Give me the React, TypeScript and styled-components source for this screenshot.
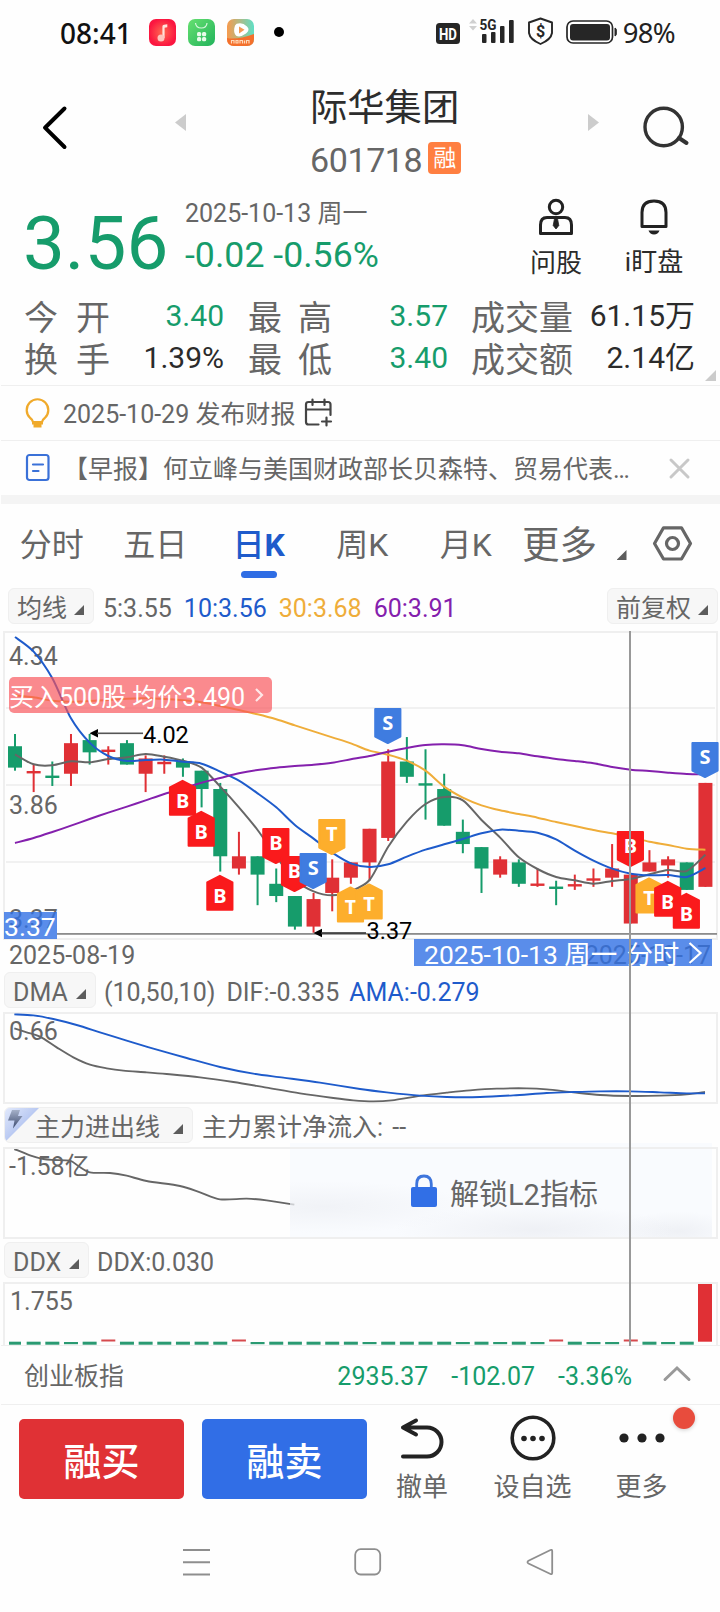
import React from "react";
import styled, { createGlobalStyle } from "styled-components";

const GREEN = "#169c6b";
const RED = "#e03035";
const BLUE = "#1e5bcb";
const GREY = "#666666";
const INK = "#2b2b2b";
const ORANGE = "#efad3a";
const PURPLE = "#8420ad";
const LINE = "#efefef";

const GlobalStyle = createGlobalStyle`
  * { box-sizing: border-box; }
  html, body { margin: 0; padding: 0; background: #fefefe; }
  body { font-family: Roboto, "Noto Sans CJK SC", sans-serif; color: ${GREY}; }
  svg { display: block; flex: none; overflow: visible; }
  svg text { font-family: Roboto, "Noto Sans CJK SC", sans-serif; }
`;

const Screen = styled.div`
  width: 720px;
  height: 1612px;
  overflow: hidden;
  display: flex;
  flex-direction: column;
  background: #fefefe;
`;

/* ---------- status bar ---------- */

const StatusBar = styled.div`
  height: 64px;
  padding: 0 45px 0 60px;
  display: flex;
  align-items: center;
  color: #111;
`;

const Clock = styled.span`
  font: 500 28px/40px "Noto Sans", sans-serif;
  width: 89px;
  margin-top: 2px;
`;

const StatusApps = styled.div`
  display: flex;
  gap: 12px;
  flex: 1;
`;

const Battery = styled.span`
  font: 400 27.5px/40px "Noto Sans", sans-serif;
  letter-spacing: -0.7px;
  margin: 2px 0 0 6px;
  color: #222;
`;

/* ---------- header ---------- */

const Header = styled.div`
  height: 122px;
  display: grid;
  grid-template-columns: 174px 136px 278px 55px 1fr;
`;

const HeaderCell = styled.div<{ $left?: number; $top: number }>`
  padding: ${(p) => p.$top}px 0 0 ${(p) => p.$left ?? 0}px;
`;

const Title = styled.div`
  font-size: 37.3px;
  line-height: 44px;
  color: #2d2d2d;
  white-space: nowrap;
  margin-top: 22px;
`;

const CodeRow = styled.div`
  display: flex;
  align-items: center;
  gap: 6px;
  margin-top: 11px;
  height: 38px;
  font-size: 34px;
  line-height: 38px;
  letter-spacing: -0.4px;
`;

const MarginBadge = styled.span`
  width: 33px;
  height: 32px;
  margin-top: -4px;
  border-radius: 4px;
  background: #ff7f41;
  color: #fff;
  font-size: 23px;
  line-height: 34px;
  text-align: center;
  letter-spacing: 0;
`;

/* ---------- quote ---------- */

const Quote = styled.div`
  height: 100px;
  display: flex;
  padding: 0 17px 0 23px;
`;

const Price = styled.div`
  width: 162px;
  font-size: 74.5px;
  line-height: 116px;
  color: ${GREEN};
`;

const QuoteDetail = styled.div`
  flex: 1;
  padding-top: 10px;
`;

const QuoteDate = styled.div`
  font-size: 25px;
  line-height: 36px;
`;

const Change = styled.div`
  font-size: 35.7px;
  line-height: 46px;
  color: ${GREEN};
`;

const QuoteAction = styled.div`
  width: 98px;
  display: flex;
  flex-direction: column;
  align-items: center;
  font-size: 26px;
  line-height: 36px;
  color: ${INK};
  padding-top: 11px;
  svg { margin-bottom: 10px; }
`;

const Stats = styled.div`
  height: 99px;
  padding: 10px 25px 0 24px;
  display: grid;
  grid-template-columns: 86px 114px 24px 84px 116px 23px 103px 1fr;
  grid-template-rows: 42px 42px;
  position: relative;
`;

const StatLabel = styled.span<{ $spread?: number }>`
  font-size: 34px;
  line-height: 44px;
  white-space: nowrap;
  word-spacing: ${(p) => p.$spread ?? 0}px;
`;

const StatValue = styled.span<{ $color?: string }>`
  font-size: 30px;
  line-height: 40px;
  color: ${(p) => p.$color ?? INK};
  text-align: right;
  white-space: nowrap;
`;

const Corner = styled.i<{ $size?: number; $color?: string }>`
  display: block;
  flex: none;
  width: ${(p) => p.$size ?? 10}px;
  height: ${(p) => p.$size ?? 10}px;
  background: ${(p) => p.$color ?? "#5c5c5c"};
  clip-path: polygon(100% 0, 100% 100%, 0 100%);
`;

const ExpandCorner = styled(Corner)`
  position: absolute;
  right: 4px;
  bottom: 4px;
`;

/* ---------- notices ---------- */

const Notice = styled.div`
  height: 55px;
  margin-left: 1px;
  padding: 0 30px 0 24px;
  border-top: 1px solid ${LINE};
  display: flex;
  align-items: center;
  font-size: 25px;
  line-height: 36px;
  white-space: nowrap;
`;

const NoticeText = styled.span<{ $grow?: boolean }>`
  flex: ${(p) => (p.$grow ? "1" : "none")};
  margin: 3px 9px 0 12px;
`;

const Divider = styled.div`
  height: 9px;
  margin-left: 1px;
  background: #f4f4f4;
`;

/* ---------- period tabs ---------- */

const Tabs = styled.div`
  height: 80px;
  display: grid;
  grid-template-columns: repeat(5, 103.5px) 84px 51px 1fr;
`;

const Tab = styled.div<{ $active?: boolean; $large?: boolean }>`
  display: flex;
  flex-direction: column;
  align-items: center;
  padding-top: 20px;
  font-size: ${(p) => (p.$large ? 37.5 : 32)}px;
  line-height: 42px;
  font-weight: ${(p) => (p.$active ? 700 : 400)};
  color: ${(p) => (p.$active ? BLUE : GREY)};
  &::after {
    content: "";
    width: 36px;
    height: 7px;
    margin-top: 5px;
    border-radius: 4px;
    background: ${(p) => (p.$active ? "#2f6de4" : "transparent")};
  }
`;

const TabGlyph = styled.span`
  font-weight: 500;
`;

const TabCorner = styled.div`
  padding: 46px 0 0 15px;
`;

const Settings = styled.div`
  padding-top: 22px;
`;

/* ---------- indicator rows ---------- */

const IndicatorRow = styled.div<{ $height: number; $top: number; $left?: number }>`
  height: ${(p) => p.$height}px;
  padding: ${(p) => p.$top}px 2px 0 ${(p) => p.$left ?? 4}px;
  display: flex;
  align-items: flex-start;
  font-size: 25px;
  line-height: 36px;
  white-space: nowrap;
`;

const Picker = styled.div<{ $width: number; $indent?: number }>`
  position: relative;
  width: ${(p) => p.$width}px;
  height: 36px;
  padding: 0 9px 0 ${(p) => p.$indent ?? 8}px;
  border: 1px solid #efefef;
  border-radius: 6px;
  background: #f7f7f7;
  display: flex;
  justify-content: space-between;
  line-height: 40px;
  overflow: hidden;
  i { margin-top: 16px; }
`;

const FlashCorner = styled.svg`
  position: absolute;
  left: -1px;
  top: -1px;
`;

const Value = styled.span<{ $color?: string; $gap?: number; $spread?: number }>`
  margin-top: 3px;
  margin-left: ${(p) => p.$gap ?? 12}px;
  word-spacing: ${(p) => p.$spread ?? 0}px;
  color: ${(p) => p.$color ?? GREY};
`;

const Spacer = styled.div`
  flex: 1;
`;

/* ---------- charts ---------- */

const ChartColumn = styled.div`
  position: relative;
`;

const ChartArea = styled.div`
  position: relative;
`;

const Crosshair = styled.div`
  position: absolute;
  left: 629px;
  top: 0;
  bottom: 0;
  width: 2px;
  background: #999;
`;

const TradeBanner = styled.div`
  position: absolute;
  left: 9px;
  top: 46px;
  width: 263px;
  height: 36px;
  border-radius: 5px;
  background: rgba(247, 82, 88, 0.68);
  color: #fff;
  font-size: 25px;
  line-height: 42px;
  white-space: nowrap;
  display: flex;
  svg { margin: 11px 0 0 9px; }
`;

const PriceTag = styled.div`
  position: absolute;
  left: 4px;
  top: 281px;
  width: 53px;
  height: 27px;
  background: rgba(49, 112, 229, 0.8);
  color: #fff;
  font-size: 26.5px;
  line-height: 29px;
`;

const DateTag = styled.div`
  position: absolute;
  left: 414px;
  top: 308px;
  width: 298px;
  height: 27px;
  padding-left: 10px;
  background: rgba(49, 112, 229, 0.8);
  color: #fff;
  font-size: 26.5px;
  line-height: 31px;
  white-space: nowrap;
  display: flex;
  gap: 9px;
  svg { margin: 2px 0 0 0; }
`;

const LockPanel = styled.div`
  position: absolute;
  left: 290px;
  top: -4px;
  width: 422px;
  height: 94px;
  padding: 3px 0 0 121px;
  display: flex;
  align-items: center;
  gap: 13px;
  font-size: 29px;
  background:
    radial-gradient(ellipse 150px 26px at 8% 68%, rgba(228, 230, 236, 0.4), transparent),
    radial-gradient(ellipse 140px 24px at 58% 92%, rgba(228, 230, 236, 0.5), transparent),
    radial-gradient(ellipse 60px 20px at 92% 94%, rgba(228, 230, 236, 0.5), transparent),
    rgba(245, 248, 254, 0.62);
  svg { margin-top: -2px; }
`;

const FrameOverlay = styled.div`
  position: absolute;
  left: 3px;
  top: 0;
  width: 715px;
  height: 92px;
  border: 2px solid ${LINE};
`;

const priceY = (p: number) => 734 + (4.02 - p) * 305.7;
const barX = (i: number) => 15 + i * 18.66;

type Candle = [up: boolean, high: number, top: number, bottom: number, low: number];

const candles: Candle[] = [
  [false, 4.02, 3.98, 3.91, 3.9],
  [true, 3.92, 3.895, 3.895, 3.83],
  [false, 3.93, 3.88, 3.88, 3.85],
  [true, 4.02, 3.99, 3.89, 3.85],
  [false, 4.02, 4.0, 3.96, 3.92],
  [true, 3.98, 3.965, 3.965, 3.92],
  [false, 4.0, 3.99, 3.92, 3.92],
  [true, 3.95, 3.94, 3.89, 3.83],
  [true, 3.95, 3.925, 3.925, 3.89],
  [false, 3.94, 3.93, 3.91, 3.88],
  [false, 3.9, 3.9, 3.84, 3.78],
  [false, 3.86, 3.84, 3.62, 3.57],
  [true, 3.7, 3.62, 3.58, 3.56],
  [false, 3.62, 3.62, 3.56, 3.46],
  [false, 3.58, 3.53, 3.49, 3.47],
  [false, 3.49, 3.49, 3.39, 3.38],
  [true, 3.5, 3.48, 3.39, 3.37],
  [true, 3.61, 3.55, 3.5, 3.44],
  [true, 3.6, 3.6, 3.55, 3.53],
  [true, 3.71, 3.71, 3.6, 3.54],
  [true, 3.97, 3.93, 3.68, 3.67],
  [false, 4.01, 3.93, 3.88, 3.86],
  [false, 3.97, 3.855, 3.855, 3.74],
  [false, 3.89, 3.84, 3.72, 3.72],
  [false, 3.74, 3.7, 3.66, 3.63],
  [false, 3.65, 3.65, 3.58, 3.5],
  [true, 3.62, 3.61, 3.56, 3.55],
  [false, 3.61, 3.6, 3.53, 3.52],
  [true, 3.58, 3.527, 3.527, 3.52],
  [false, 3.54, 3.517, 3.517, 3.46],
  [true, 3.56, 3.525, 3.525, 3.51],
  [true, 3.58, 3.544, 3.544, 3.52],
  [true, 3.66, 3.58, 3.55, 3.52],
  [true, 3.56, 3.56, 3.4, 3.4],
  [true, 3.64, 3.6, 3.57, 3.57],
  [true, 3.62, 3.61, 3.59, 3.55],
  [false, 3.6, 3.6, 3.51, 3.51],
  [true, 3.86, 3.86, 3.52, 3.52],
];

/* Moving averages, one value per candle, in thirds of a pixel below y = 720. */
const ma5 = [103, 133, 136, 124, 127, 117, 112, 102, 110, 122, 143, 200, 262, 330, 410, 480, 514, 526, 513, 480, 380, 305, 252, 231, 241, 300, 353, 412, 447, 471, 481, 491, 483, 477, 463, 450, 453, 404];
const ma10 = [-249, -205, -125, -5, 68, 108, 123, 120, 119, 125, 131, 155, 182, 220, 262, 315, 356, 398, 430, 441, 433, 410, 389, 373, 357, 340, 329, 332, 338, 358, 392, 422, 446, 461, 466, 465, 471, 444];
const ma30 = [-74, -68, -58, -55, -57, -60, -64, -65, -63, -59, -53, -42, -30, -17, -2, 16, 34, 52, 70, 92, 104, 122, 152, 200, 233, 256, 271, 282, 293, 306, 318, 330, 340, 352, 365, 375, 386, 389];
const ma60 = [369, 354, 336, 317, 297, 278, 260, 241, 222, 205, 188, 174, 160, 150, 143, 138, 134, 128, 118, 108, 95, 84, 75, 73, 76, 87, 95, 100, 109, 117, 123, 130, 141, 149, 153, 158, 162, 163];

type Point = [number, number];

const average = (values: number[]): Point[] => values.map((v, i) => [barX(i), 720 + v / 3]);
const scaled = (points: Point[]): Point[] => points.map(([x, y]) => [x / 3, 970 + y / 3]);

function smooth(pts: Point[]) {
  let d = `M${pts[0][0]} ${pts[0][1]}`;
  for (let i = 0; i < pts.length - 1; i++) {
    const a = pts[Math.max(i - 1, 0)];
    const b = pts[i];
    const c = pts[i + 1];
    const e = pts[Math.min(i + 2, pts.length - 1)];
    d += `C${b[0] + (c[0] - a[0]) / 7} ${b[1] + (c[1] - a[1]) / 7} ${c[0] - (e[0] - b[0]) / 7} ${c[1] - (e[1] - b[1]) / 7} ${c[0]} ${c[1]}`;
  }
  return d;
}

const difLine = scaled([[43, 175], [80, 187], [120, 200], [170, 232], [220, 262], [270, 284], [320, 295], [370, 302], [440, 307], [500, 312], [600, 322], [700, 336], [800, 353], [900, 370], [1000, 384], [1060, 391], [1120, 394], [1175, 391], [1270, 376], [1340, 368], [1410, 361], [1490, 356], [1580, 355], [1640, 358], [1720, 367], [1800, 375], [1890, 378], [1980, 377], [2060, 373], [2115, 366]]);
const amaLine = scaled([[43, 133], [100, 136], [160, 147], [230, 165], [300, 187], [380, 212], [460, 236], [560, 264], [660, 291], [760, 311], [850, 323], [960, 338], [1080, 357], [1160, 367], [1260, 377], [1340, 381], [1440, 381], [1540, 376], [1640, 369], [1720, 366], [1800, 364], [1890, 364], [1980, 367], [2060, 370], [2115, 370]]);
const flowLine = scaled([[43, 537], [90, 556], [130, 567], [160, 570], [210, 572], [235, 588], [270, 607], [330, 609], [380, 617], [440, 633], [540, 648], [600, 667], [660, 688], [740, 686], [800, 691], [883, 704]]);

type MarkerKind = "B" | "S" | "T";
const markerColor: Record<MarkerKind, string> = { B: "#fa1a1c", S: "#3f7ce0", T: "#fdae2c" };

const markers: { i: number; y: number; kind: MarkerKind; up?: boolean }[] = [
  { i: 9, y: 780.3, kind: "B", up: true },
  { i: 10, y: 811.3, kind: "B", up: true },
  { i: 11, y: 875.3, kind: "B", up: true },
  { i: 14, y: 828, kind: "B" },
  { i: 15, y: 856, kind: "B" },
  { i: 16, y: 853, kind: "S" },
  { i: 17, y: 819, kind: "T" },
  { i: 18, y: 887, kind: "T", up: true },
  { i: 19, y: 884, kind: "T", up: true },
  { i: 20, y: 708, kind: "S" },
  { i: 33, y: 831, kind: "B" },
  { i: 34, y: 878, kind: "T", up: true },
  { i: 35, y: 881.3, kind: "B", up: true },
  { i: 36, y: 893.3, kind: "B", up: true },
  { i: 37, y: 742, kind: "S" },
];

const MarkerLetter = styled.text`
  && { font: 700 20px "Noto Sans", sans-serif; }
  fill: #fff;
  text-anchor: middle;
`;

function Marker({ x, y, kind, up }: { x: number; y: number; kind: MarkerKind; up?: boolean }) {
  const shape = up
    ? "M0 0.5L12.6 7V34.5H-12.6V7Z"
    : "M-12.6 1H12.6V28.5L0 35L-12.6 28.5Z";
  return (
    <g transform={`translate(${x - 0.4} ${y})`}>
      <path d={shape} fill={markerColor[kind]} stroke={markerColor[kind]} strokeWidth="2" strokeLinejoin="round" />
      <MarkerLetter x="0" y={up ? 27.3 : 22.3}>{kind}</MarkerLetter>
    </g>
  );
}

function Frame({ top, bottom }: { top: number; bottom: number }) {
  return <rect x="4" y={top} width="713" height={bottom - top} fill="none" stroke={LINE} strokeWidth="2" />;
}

function CandleChart() {
  return (
    <svg width="720" height="336" viewBox="0 631 720 336">
      <Frame top={632} bottom={939} />
      {[708, 785, 862].map((y) => (
        <rect key={y} x="6" y={y - 1} width="709" height="2" fill="#f1f1f1" />
      ))}
      <g fontSize="25" fill={GREY}>
        <text x="9" y="665">4.34</text>
        <text x="9" y="813.5">3.86</text>
        <text x="9" y="928">3.37</text>
        <text x="9" y="964">2025-08-19</text>
        <text x="711" y="964" textAnchor="end">2025-10-17</text>
      </g>
      {candles.map(([up, high, top, bottom, low], i) => {
        const x = barX(i);
        const flat = top === bottom;
        const y = priceY(top);
        return (
          <g key={i} fill={up ? RED : GREEN}>
            <rect x={x - 1} y={priceY(high)} width="2" height={priceY(low) - priceY(high)} />
            <rect x={x - 7} y={flat ? y - 1.2 : y} width="14" height={flat ? 2.4 : priceY(bottom) - y} />
          </g>
        );
      })}
      <g fill="none" strokeWidth="2">
        <path d={smooth(average(ma5))} stroke={GREY} />
        <path d={smooth(average(ma10))} stroke={BLUE} />
        <path d={smooth(average(ma30))} stroke={ORANGE} />
        <path d={smooth(average(ma60))} stroke={PURPLE} />
      </g>
      {markers.map((m) => (
        <Marker key={m.i} x={barX(m.i)} y={m.y} kind={m.kind} up={m.up} />
      ))}
      <rect x="57" y="933" width="660" height="1.8" fill="#8c8c8c" />
      <g fill="#000" fontSize="23.5">
        <path d="M89.5 733.3L98 729V737.6Z" />
        <rect x="97" y="732.5" width="46" height="1.6" fill="#555" />
        <text x="143" y="743.3">4.02</text>
        <path d="M313.5 933L322 928.7V937.3Z" />
        <rect x="321" y="932.2" width="45" height="1.6" fill="#333" />
        <text x="366.5" y="938.7">3.37</text>
      </g>
    </svg>
  );
}

const ddxRed = [5, 12, 29, 33];
const ddxThin = [3, 13, 19, 24, 26, 28, 31, 32, 35];

function DdxChart() {
  return (
    <svg width="720" height="64" viewBox="0 1282 720 64">
      <path d="M4 1345V1283H717V1345" fill="none" stroke={LINE} strokeWidth="2" />
      <rect x="1" y="1345" width="719" height="1" fill={LINE} />
      <text x="10" y="1310" fontSize="25" fill={GREY}>1.755</text>
      {candles.slice(0, 37).map((_, i) => {
        const red = ddxRed.includes(i);
        const thin = ddxThin.includes(i);
        return (
          <rect
            key={i}
            x={barX(i) - (i ? 7 : 6)}
            y={red ? 1339.5 : thin ? 1342 : 1341.7}
            width={i ? 14 : 12}
            height={red ? 2 : thin ? 2.2 : 3}
            fill={red ? "#d64a4e" : "#2a9a72"}
          />
        );
      })}
      <rect x="698" y="1284" width="14" height="57.7" fill={RED} />
    </svg>
  );
}

/* ---------- bottom area ---------- */

const IndexBar = styled.div`
  height: 58px;
  padding: 0 29px 0 24px;
  display: flex;
  align-items: center;
  font-size: 25px;
  line-height: 36px;
  color: ${GREEN};
  svg { margin: -2px 0 0 8px; }
`;

const IndexName = styled.span`
  flex: 1;
  padding-top: 4px;
  color: ${GREY};
`;

const IndexValue = styled.span`
  margin: 3px 23px 0 0;
`;

const TradeBar = styled.div`
  height: 108px;
  margin-left: 1px;
  padding: 14px 0 0 18px;
  border-top: 1px solid ${LINE};
  display: flex;
`;

const TradeButton = styled.div<{ $bg: string }>`
  width: 165px;
  height: 80px;
  margin-right: 18px;
  border-radius: 5px;
  background: ${(p) => p.$bg};
  color: #fff;
  font-size: 38px;
  font-weight: 500;
  line-height: 86px;
  text-align: center;
`;

const TradeAction = styled.div<{ $width: number }>`
  position: relative;
  width: ${(p) => p.$width}px;
  display: flex;
  flex-direction: column;
  align-items: center;
  font-size: 26px;
  line-height: 36px;
  margin-top: -4px;
  white-space: nowrap;
  svg { margin-bottom: 8px; }
`;

const Dot = styled.div`
  position: absolute;
  left: 67px;
  top: -8px;
  width: 22px;
  height: 22px;
  border-radius: 50%;
  background: #e84c3d;
  box-shadow: 0 1px 4px rgba(0, 0, 0, 0.2);
`;

const NavBar = styled.div`
  flex: 1;
  padding: 36px 166px 0 182px;
  display: flex;
  justify-content: space-between;
`;

export default function App() {
  return (
    <Screen>
      <GlobalStyle />
      <StatusBar>
        <Clock>08:41</Clock>
        <StatusApps>
          <svg width="27" height="27" viewBox="0 0 27 27">
            <defs>
              <radialGradient id="music"><stop offset="0" stopColor="#ff6a50" /><stop offset="1" stopColor="#fb1640" /></radialGradient>
              <linearGradient id="market" x2="1" y2="1"><stop offset="0" stopColor="#66e070" /><stop offset="1" stopColor="#22b35c" /></linearGradient>
              <linearGradient id="video" x2="1" y2="0"><stop offset="0" stopColor="#f79a4d" /><stop offset="1" stopColor="#5edfc6" /></linearGradient>
            </defs>
            <rect width="27" height="27" rx="7" fill="url(#music)" />
            <path d="M13.4 18.5V7.5Q13.4 6 15 5.8L18.3 5.3V8.2L15.6 8.7V19Z" fill="#ffe3dc" />
            <circle cx="12" cy="19" r="3.5" fill="#ffc5bd" />
          </svg>
          <svg width="27" height="27" viewBox="0 0 27 27">
            <rect width="27" height="27" rx="7" fill="url(#market)" />
            <path d="M7.5 4Q8 9 13.3 9T19 4" fill="none" stroke="#d9f7de" strokeWidth="1.2" />
            <g fill="#e9fbea"><rect x="9" y="13" width="4.2" height="4.2" rx="1.5" /><rect x="14" y="13" width="4.2" height="4.2" rx="1.5" /><rect x="9" y="18" width="4.2" height="4.2" rx="1.5" /><rect x="14" y="18" width="4.2" height="4.2" rx="1.5" /></g>
          </svg>
          <svg width="27" height="27" viewBox="0 0 27 27">
            <rect width="27" height="27" rx="7" fill="url(#video)" />
            <path d="M0 19Q10 21 27 15V20Q27 27 20 27H7Q0 27 0 20Z" fill="#f4702c" />
            <path d="M10 5.500Q15 3.500 19.500 8Q22.500 10.800 18.500 14Q13 18 9.500 16Q7.500 14 8 9.500Q8.300 6.300 10 5.500Z" fill="#fff" stroke="#fff" strokeWidth="1.500" />
            <path d="M12 7.500L17.500 10.700L12 14.500Z" fill="#f39a55" />
            <path d="M4.500 24.500V21.500H7V24.500M9 24V21.500H11V24ZM13 24.500V21.500H15.500V24.500M17.500 24.500V21.500M19.500 24.500V21.500H22V24.500" stroke="#ffd9b8" fill="none" strokeWidth="1.200" />
          </svg>
          <svg width="20" height="27" viewBox="0 0 20 27"><circle cx="13" cy="13" r="5" fill="#000" /></svg>
        </StatusApps>
        <svg width="182" height="32" viewBox="434 16 182 32">
          <rect x="435" y="23" width="24" height="21" rx="3.5" fill="#262626" />
          <text x="438" y="39.5" fontSize="16" fontWeight="700" fill="#fff" textLength="18" lengthAdjust="spacingAndGlyphs">HD</text>
          <path d="M468 23.5L472 19L476 23.5ZM468 26L472 30.5L476 26Z" fill="#d0d0d0" />
          <text x="478.5" y="30" fontSize="15" fontWeight="700" fill="#262626" textLength="17" lengthAdjust="spacingAndGlyphs">5G</text>
          <g fill="#262626"><rect x="481" y="34" width="4.5" height="9" rx="1" /><rect x="490" y="32" width="4.5" height="11" rx="1" /><rect x="499" y="26" width="4.5" height="17" rx="1" /><rect x="508" y="20" width="4.7" height="23" rx="1" /></g>
          <path d="M539.500 18.500L551 22.500V33Q550 39.500 539.500 44Q529 39.500 528 33V22.500Z" fill="none" stroke="#262626" strokeWidth="1.900" strokeLinejoin="round" />
          <text x="539.500" y="37" textAnchor="middle" fontSize="16" fontWeight="700" fill="#262626">$</text>
          <rect x="566" y="21" width="45.500" height="22" rx="6" fill="none" stroke="#262626" strokeWidth="1.700" />
          <rect x="569" y="24" width="40" height="16.500" rx="3" fill="#262626" />
          <path d="M614 28Q615.300 28.500 615.300 30V34Q615.300 35.500 614 36Z" fill="#262626" stroke="#262626" />
        </svg>
        <Battery>98%</Battery>
      </StatusBar>

      <Header>
        <HeaderCell $left={42} $top={41}>
          <svg width="26" height="46" viewBox="0 0 26 46"><path d="M22.5 3.5L3 22.7L22.5 42" fill="none" stroke="#000" strokeWidth="4" strokeLinecap="round" strokeLinejoin="round" /></svg>
        </HeaderCell>
        <HeaderCell $left={1} $top={50}>
          <svg width="11" height="17" viewBox="0 0 11 17"><path d="M11 0V17L0 8.5Z" fill="#ccc" /></svg>
        </HeaderCell>
        <div>
          <Title>际华集团</Title>
          <CodeRow>601718<MarginBadge>融</MarginBadge></CodeRow>
        </div>
        <HeaderCell $top={50}>
          <svg width="11" height="17" viewBox="0 0 11 17"><path d="M0 0V17L11 8.5Z" fill="#ccc" /></svg>
        </HeaderCell>
        <HeaderCell $top={42}>
          <svg width="46" height="44" viewBox="643 106 46 44"><circle cx="663.7" cy="127" r="18.7" fill="none" stroke="#333" strokeWidth="3.4" /><path d="M679 138L686.5 143" stroke="#333" strokeWidth="4" strokeLinecap="round" /></svg>
        </HeaderCell>
      </Header>

      <Quote>
        <Price>3.56</Price>
        <QuoteDetail>
          <QuoteDate>2025-10-13 周一</QuoteDate>
          <Change>-0.02 -0.56%</Change>
        </QuoteDetail>
        <QuoteAction>
          <svg width="36" height="38" viewBox="0 0 36 38" fill="none" stroke="#222" strokeWidth="3">
            <circle cx="18" cy="10" r="6.700" />
            <path d="M2.500 36.500V28Q2.500 20.500 9 20.500H27Q33.500 20.500 33.500 28V36.500Z" strokeLinejoin="round" />
            <path d="M16.500 21.500H19.500L20.800 28.500L18 32L15.200 28.500Z" fill="#222" strokeWidth="0.800" />
          </svg>
          问股
        </QuoteAction>
        <QuoteAction>
          <svg width="30" height="37" viewBox="0 0 30 37" fill="none" stroke="#222" strokeWidth="3">
            <path d="M3 29.500V15.500Q3 4 15 4T27 15.500V29.500Z" strokeLinejoin="round" />
            <path d="M9.500 33.500H20.500Q19 37.500 15 37.500T9.500 33.500Z" fill="#222" stroke="none" />
          </svg>
          i盯盘
        </QuoteAction>
      </Quote>

      <Stats>
        <StatLabel $spread={9.5}>今 开</StatLabel><StatValue $color={GREEN}>3.40</StatValue><i />
        <StatLabel $spread={7.5}>最 高</StatLabel><StatValue $color={GREEN}>3.57</StatValue><i />
        <StatLabel>成交量</StatLabel><StatValue>61.15万</StatValue>
        <StatLabel $spread={9.5}>换 手</StatLabel><StatValue>1.39%</StatValue><i />
        <StatLabel $spread={7.5}>最 低</StatLabel><StatValue $color={GREEN}>3.40</StatValue><i />
        <StatLabel>成交额</StatLabel><StatValue>2.14亿</StatValue>
        <ExpandCorner $size={11} $color="#cbcbcb" />
      </Stats>

      <Notice>
        <svg width="26" height="30" viewBox="0 0 26 30" fill="none" stroke="#f0aa2b" strokeWidth="2.200">
          <path d="M8 24Q7.600 21.800 5.200 20A10.800 10.800 0 1 1 19.800 20Q17.400 21.800 17 24Z" strokeLinejoin="round" />
          <path d="M7 25H18M8.500 28H16.500" strokeWidth="2.800" />
        </svg>
        <NoticeText>2025-10-29 发布财报</NoticeText>
        <svg width="28" height="30" viewBox="0 0 28 30" fill="none" stroke="#444" strokeWidth="2.200" strokeLinecap="round">
          <path d="M14.500 26.500H4.500Q2 26.500 2 24V6.500Q2 4 4.500 4H24Q26.500 4 26.500 6.500V17M2 11.500H26.500M8.500 1.500V7M20.500 1.500V7M22.500 19.500V27.500M18 23.500H27" />
        </svg>
      </Notice>
      <Notice>
        <svg width="26" height="29" viewBox="0 0 26 29" fill="none" stroke="#3a71d8" strokeWidth="2.200" strokeLinecap="round">
          <rect x="2" y="1" width="21.500" height="25" rx="2.500" />
          <path d="M8 10.500H18M8 17H13.500" />
        </svg>
        <NoticeText $grow>【早报】何立峰与美国财政部长贝森特、贸易代表…</NoticeText>
        <svg width="21" height="21" viewBox="0 0 21 21" stroke="#c8c8c8" strokeWidth="3" strokeLinecap="round"><path d="M2 2L19 19M19 2L2 19" /></svg>
      </Notice>
      <Divider />

      <Tabs>
        <Tab>分时</Tab>
        <Tab>五日</Tab>
        <Tab $active><span><TabGlyph>日</TabGlyph>K</span></Tab>
        <Tab>周K</Tab>
        <Tab>月K</Tab>
        <Tab $large>更多</Tab>
        <TabCorner><Corner /></TabCorner>
        <Settings>
          <svg width="40" height="35" viewBox="0 0 40 35" fill="none" stroke="#666" strokeWidth="3.200" strokeLinejoin="round">
            <path d="M10.500 1.800H28.500L37.500 17.500L28.500 33H10.500L1.500 17.500Z" />
            <circle cx="19.500" cy="17.500" r="6" />
          </svg>
        </Settings>
      </Tabs>

      <IndicatorRow $height={47} $top={4} $left={8}>
        <Picker $width={86}>均线<Corner /></Picker>
        <Value $gap={9}>5:3.55</Value>
        <Value $color={BLUE}>10:3.56</Value>
        <Value $color={ORANGE}>30:3.68</Value>
        <Value $color={PURPLE}>60:3.91</Value>
        <Spacer />
        <Picker $width={111}>前复权<Corner /></Picker>
      </IndicatorRow>

      <ChartColumn>
        <ChartArea>
          <CandleChart />
          <TradeBanner>
            买入500股 均价3.490
            <svg width="10" height="14" viewBox="0 0 10 14"><path d="M2 1L8 7L2 13" fill="none" stroke="#fff" strokeOpacity="0.8" strokeWidth="2.200" /></svg>
          </TradeBanner>
          <PriceTag>3.37</PriceTag>
          <DateTag>
            <span>2025-10-13 周一</span>
            <span>分时</span>
            <svg width="14" height="24" viewBox="0 0 14 24"><path d="M1.500 2L12.500 12L1.500 22" fill="none" stroke="#fff" strokeWidth="2.200" /></svg>
          </DateTag>
        </ChartArea>

        <IndicatorRow $height={45} $top={5}>
          <Picker $width={92}>DMA<Corner /></Picker>
          <Value $gap={8}>(10,50,10)</Value>
          <Value $gap={11}>DIF:-0.335</Value>
          <Value $gap={10} $color={BLUE}>AMA:-0.279</Value>
        </IndicatorRow>
        <svg width="720" height="92" viewBox="0 1012 720 92">
          <Frame top={1013} bottom={1103} />
          <text x="9" y="1039.500" fontSize="25" fill={GREY}>0.66</text>
          <g fill="none" strokeWidth="1.900">
            <path d={smooth(difLine)} stroke={GREY} />
            <path d={smooth(amaLine)} stroke={BLUE} />
          </g>
        </svg>

        <IndicatorRow $height={43} $top={3}>
          <Picker $width={189} $indent={30}>
            <FlashCorner width="37" height="36" viewBox="0 0 37 36">
              <defs>
                <linearGradient id="flash" x2="1" y2="1"><stop offset="0" stopColor="#e4ebfc" /><stop offset="0.500" stopColor="#b9c9f2" /></linearGradient>
                <linearGradient id="bolt" x2="0" y2="1"><stop offset="0" stopColor="#a5b0c8" /><stop offset="1" stopColor="#3c4b70" /></linearGradient>
              </defs>
              <path d="M0 0H36L0 36Z" fill="url(#flash)" />
              <path d="M8 3H16L14 9H18.500L9 21.500L10.500 13.500H4Z" fill="url(#bolt)" />
            </FlashCorner>
            主力进出线<Corner />
          </Picker>
          <Value $gap={9} $spread={3}>主力累计净流入: --</Value>
        </IndicatorRow>
        <ChartArea>
          <svg width="720" height="92" viewBox="0 1147 720 92">
            <text x="9" y="1175" fontSize="25" fill={GREY}>-1.58亿</text>
            <path d={smooth(flowLine)} fill="none" stroke={GREY} strokeWidth="1.900" />
          </svg>
          <LockPanel>
            <svg width="26" height="33" viewBox="0 0 26 33"><path d="M5.700 15V10Q5.700 2 13 2T20.300 10V15" fill="none" stroke="#3e75dc" strokeWidth="2.800" /><rect y="13" width="26" height="20" rx="2" fill="#316fe6" /></svg>
            解锁L2指标
          </LockPanel>
          <FrameOverlay />
        </ChartArea>

        <IndicatorRow $height={43} $top={3}>
          <Picker $width={85}>DDX<Corner /></Picker>
          <Value $gap={8}>DDX:0.030</Value>
        </IndicatorRow>
        <DdxChart />
        <Crosshair />
      </ChartColumn>

      <IndexBar>
        <IndexName>创业板指</IndexName>
        <IndexValue>2935.37</IndexValue>
        <IndexValue>-102.07</IndexValue>
        <IndexValue>-3.36%</IndexValue>
        <svg width="28" height="18" viewBox="0 0 28 18"><path d="M2 14.500L14 3L26 14.500" fill="none" stroke="#999" strokeWidth="3" strokeLinecap="round" /></svg>
      </IndexBar>

      <TradeBar>
        <TradeButton $bg="#e03135">融买</TradeButton>
        <TradeButton $bg="#316ee6">融卖</TradeButton>
        <TradeAction $width={74}>
          <svg width="46" height="46" viewBox="0 0 46 46" fill="none" stroke="#222" strokeWidth="4" strokeLinecap="round" strokeLinejoin="round">
            <path d="M4 12.500H28A14.500 14.500 0 0 1 28 41.500H4M17 5.500L4 12.500L17 19.500" />
          </svg>
          撤单
        </TradeAction>
        <TradeAction $width={147}>
          <svg width="46" height="46" viewBox="0 0 46 46"><circle cx="23" cy="23" r="20.800" fill="none" stroke="#222" strokeWidth="3.600" /><g fill="#222"><circle cx="14" cy="23.500" r="2.800" /><circle cx="23" cy="23.500" r="2.800" /><circle cx="32" cy="23.500" r="2.800" /></g></svg>
          设自选
        </TradeAction>
        <TradeAction $width={71}>
          <svg width="46" height="46" viewBox="0 0 46 46" fill="#222"><circle cx="5" cy="23" r="4.600" /><circle cx="23" cy="23" r="4.600" /><circle cx="41" cy="23" r="4.600" /></svg>
          更多
          <Dot />
        </TradeAction>
      </TradeBar>

      <NavBar>
        <svg width="28" height="28" viewBox="0 0 28 28" stroke="#8e8e8e" strokeWidth="2"><path d="M1 2H28M1 14.300H28M1 26.500H28" /></svg>
        <svg width="28" height="28" viewBox="0 0 28 28"><rect x="1.200" y="1.200" width="25" height="25.300" rx="5.500" fill="none" stroke="#8e8e8e" strokeWidth="1.800" /></svg>
        <svg width="28" height="28" viewBox="0 0 28 28"><path d="M24.500 2Q26 1.300 26.200 3V25Q26 26.700 24.500 26L2.500 15.500Q0.500 14.200 2.500 12.800Z" fill="none" stroke="#8e8e8e" strokeWidth="1.800" /></svg>
      </NavBar>
    </Screen>
  );
}
